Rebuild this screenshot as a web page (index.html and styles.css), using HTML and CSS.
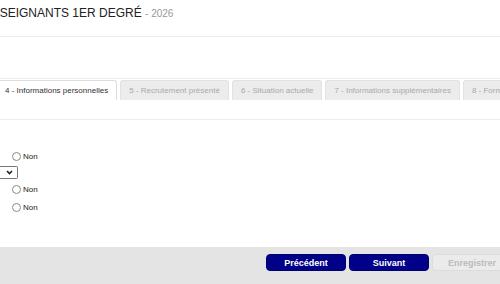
FILE: index.html
```html
<!DOCTYPE html>
<html lang="fr">
<head>
  <meta charset="UTF-8">
  <meta name="viewport" content="width=device-width, initial-scale=1.0">
  <title>Enseignants 1er degré - 2026</title>
  <link rel="stylesheet" href="styles.css">
</head>
<body>
  <div class="page">
    <div class="header">
      <h1 class="title">ENSEIGNANTS 1ER DEGRÉ <span class="year">- 2026</span></h1>
    </div>

    <div class="tabbar">
      <ul class="tabs">
        <li class="tab active">4 - Informations personnelles</li>
        <li class="tab">5 - Recrutement présenté</li>
        <li class="tab">6 - Situation actuelle</li>
        <li class="tab">7 - Informations supplémentaires</li>
        <li class="tab">8 - Formation</li>
      </ul>
    </div>

    <div class="form">
      <div class="row">
        <span class="radio"></span><span class="label">Non</span>
      </div>
      <div class="row row-select">
        <div class="select">
          <svg width="7" height="5" viewBox="0 0 7 5"><path d="M1 1 L3.5 3.5 L6 1" fill="none" stroke="#222" stroke-width="1.6"/></svg>
        </div>
      </div>
      <div class="row">
        <span class="radio"></span><span class="label">Non</span>
      </div>
      <div class="row">
        <span class="radio"></span><span class="label">Non</span>
      </div>
    </div>

    <div class="footer">
      <button class="btn">Précédent</button>
      <button class="btn">Suivant</button>
      <button class="btn disabled">Enregistrer</button>
    </div>
  </div>
</body>
</html>
```

FILE: styles.css
```css
html, body {
  margin: 0;
  padding: 0;
  height: 100%;
  overflow: hidden;
  background-color: #fff;
}
body {
  font-family: Arial, "Liberation Sans", sans-serif;
  color: #333;
}
.page {
  width: 500px;
  height: 284px;
  display: flex;
  flex-direction: column;
}
.header {
  height: 36px;
  border-bottom: 1px solid #ececec;
}
.title {
  margin: 0;
  padding-top: 6px;
  font-size: 12px;
  font-weight: normal;
  line-height: 14px;
  color: #222;
  white-space: nowrap;
  text-indent: -17px;
}
.year {
  font-size: 10px;
  color: #999;
}
.tabbar {
  margin-top: 41px;
  border-top: 1px solid #ececec;
  border-bottom: 1px solid #ececec;
  padding-top: 1px;
  padding-bottom: 19px;
}
.tabs {
  list-style: none;
  margin: 0 0 0 -4px;
  padding: 0;
  display: flex;
  gap: 3px;
  white-space: nowrap;
}
.tab {
  height: 20px;
  line-height: 20px;
  padding: 0 8px;
  font-size: 8px;
  color: #aaa;
  background-color: #ececec;
  border: 1px solid #e2e2e2;
  border-bottom: none;
  border-radius: 3px 3px 0 0;
  box-sizing: border-box;
}
.tab.active {
  background-color: #fff;
  color: #333;
  border-color: #ddd;
}
.form {
  padding-top: 27px;
  flex: 1;
}
.row {
  display: flex;
  align-items: center;
  gap: 2px;
  height: 18px;
  padding-left: 12px;
}
.row-select {
  height: 14px;
  margin-bottom: 1px;
  padding-left: 0;
}
.radio {
  width: 7px;
  height: 7px;
  border: 1px solid #8a8a8a;
  border-radius: 50%;
  background-color: #fff;
}
.label {
  font-size: 8px;
  color: #222;
}
.select {
  width: 13px;
  height: 11px;
  border: 1px solid #767676;
  border-left: none;
  border-radius: 0 2px 2px 0;
  display: flex;
  align-items: center;
  justify-content: flex-end;
  padding-right: 4px;
  box-sizing: content-box;
}
.footer {
  height: 37px;
  background-color: #e4e4e4;
  display: flex;
  align-items: flex-start;
  gap: 3px;
  padding-top: 7px;
  padding-left: 266px;
  box-sizing: border-box;
}
.btn {
  flex: none;
  width: 80px;
  height: 17px;
  padding: 0;
  border: 1px solid #00006a;
  border-radius: 4px;
  background-color: #000088;
  color: #fff;
  font-family: Arial, "Liberation Sans", sans-serif;
  font-size: 9px;
  font-weight: bold;
}
.btn.disabled {
  background-color: #ebebeb;
  border-color: #dcdcdc;
  color: #bbb;
}
```
